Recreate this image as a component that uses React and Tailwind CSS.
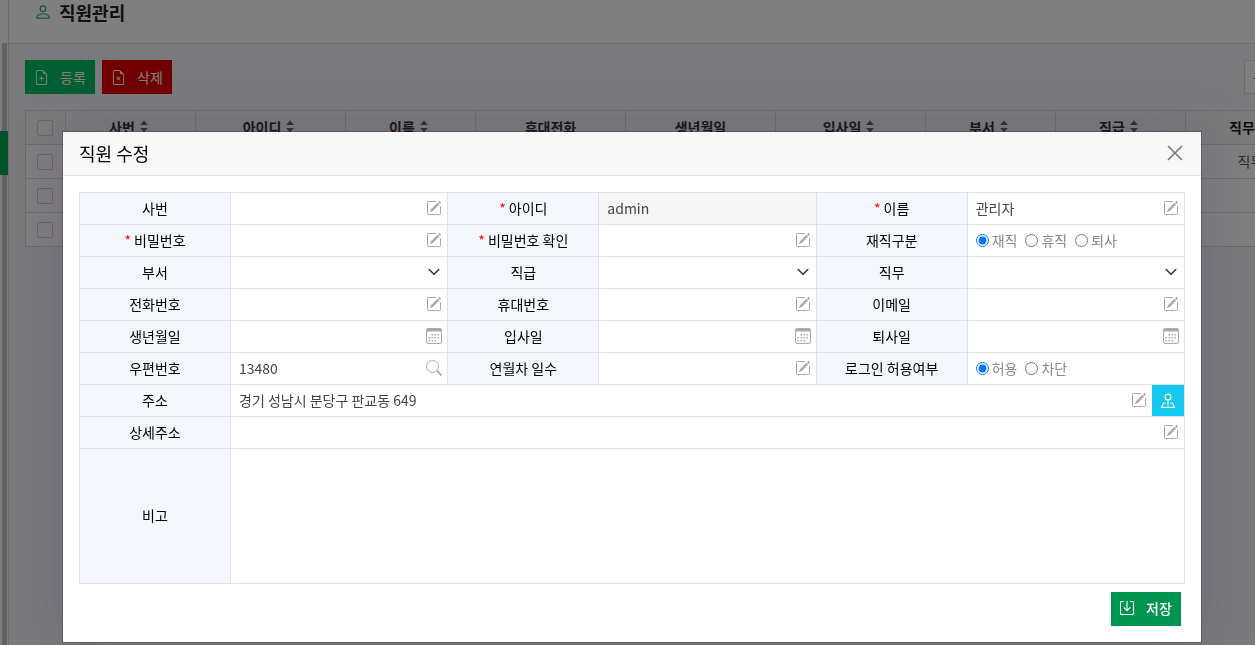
import { BsPerson, BsFileEarmarkPlus, BsFileEarmarkX } from "react-icons/bs";

const columns = [
  { name: "사번", width: "w-[130px]", sort: true },
  { name: "아이디", width: "w-[150px]", sort: true },
  { name: "이름", width: "w-[130px]", sort: true },
  { name: "휴대전화", width: "w-[150px]" },
  { name: "생년월일", width: "w-[150px]" },
  { name: "입사일", width: "w-[150px]", sort: true },
  { name: "부서", width: "w-[130px]", sort: true },
  { name: "직급", width: "w-[130px]", sort: true },
  { name: "직무", width: "w-[130px]", sort: true },
];

const rows = [{ 직무: "직무" }, {}, {}];

function SortIcon() {
  return (
    <svg width="8" height="13" viewBox="0 0 8 13" fill="#555" className="mr-1 ml-[5px] inline-block">
      <path d="M4 0.5L7.8 5H0.2z" />
      <path d="M4 12.5L7.8 8H0.2z" />
    </svg>
  );
}

function EditIcon() {
  return (
    <svg width="16" height="16" viewBox="0 0 16 16" fill="none" stroke="#aaa" className="shrink-0">
      <path d="M10 1.5H2.2Q1.5 1.5 1.5 2.2V13.8Q1.5 14.5 2.2 14.5H13.8Q14.5 14.5 14.5 13.8V6" />
      <path d="M4 12L5 9.2L11.4 2.8L13.2 4.6L6.8 11z" fill="#aaa" stroke="none" />
      <path d="M12.1 2.1L13.4 0.8L15.2 2.6L13.9 3.9z" fill="#aaa" stroke="none" />
    </svg>
  );
}

function CalendarIcon() {
  return (
    <svg width="16" height="16" viewBox="0 0 16 16" fill="#aaa" className="shrink-0">
      <rect x="0.5" y="0.5" width="15" height="15" rx="1.5" fill="none" stroke="#aaa" />
      <path d="M0.5 1.5Q0.5 0.5 1.5 0.5H14.5Q15.5 0.5 15.5 1.5V3.5H0.5z" />
      {[5.5, 8.5, 11.5].map((x) => (
        <rect key={`a${x}`} x={x} y="6" width="1.6" height="1.5" />
      ))}
      {[2.5, 5.5, 8.5, 11.5].map((x) => (
        <rect key={`b${x}`} x={x} y="9" width="1.6" height="1.5" />
      ))}
      {[2.5, 5.5, 8.5].map((x) => (
        <rect key={`c${x}`} x={x} y="12" width="1.6" height="1.5" />
      ))}
    </svg>
  );
}

function SearchIcon() {
  return (
    <svg width="16" height="16" viewBox="0 0 16 16" fill="none" stroke="#aaa" className="shrink-0">
      <circle cx="6.5" cy="6.5" r="6" />
      <path d="M11 11L15.3 15.3" strokeWidth="1.8" />
    </svg>
  );
}

function ChevronIcon() {
  return (
    <svg width="12" height="12" viewBox="0 0 12 12" fill="none" stroke="#343a40" strokeWidth="1.6" strokeLinecap="round" strokeLinejoin="round" className="pointer-events-none absolute right-[7px] top-[9px]">
      <path d="M1.2 3.5L6 8.3L10.8 3.5" />
    </svg>
  );
}

function MapPersonIcon() {
  return (
    <svg width="16" height="16" viewBox="0 0 16 16" fill="none" stroke="#fff" strokeWidth="1.2">
      <circle cx="8" cy="4" r="2.9" />
      <path d="M8 7V12.5" />
      <path d="M5.5 10H3.6L1.5 14.3H14.5L12.4 10H10.5" />
    </svg>
  );
}

function SaveIcon() {
  return (
    <svg width="16" height="16" viewBox="0 0 16 16" fill="none" stroke="#fff" strokeWidth="1.1">
      <path d="M5 1.5H2.5Q1.5 1.5 1.5 2.5V13.5Q1.5 14.5 2.5 14.5H13.5Q14.5 14.5 14.5 13.5V2.5Q14.5 1.5 13.5 1.5H11" />
      <path d="M8 1V10.5M4.7 7.3L8 10.6L11.3 7.3" />
    </svg>
  );
}

function CloseIcon() {
  return (
    <svg width="16" height="16" viewBox="0 0 16 16" fill="none" stroke="#777" strokeWidth="1.6">
      <path d="M1 1L15 15M15 1L1 15" />
    </svg>
  );
}

function Label({ id, required, children }) {
  return (
    <th scope="row" className="border border-[#dee2e6] bg-[#f3f6fb] p-0 pb-0.5 text-center font-normal text-black">
      <label htmlFor={id}>
        {required && <span className="text-[#f00]">* </span>}
        {children}
      </label>
    </th>
  );
}

function Cell({ span, children }) {
  return (
    <td colSpan={span} className="border border-[#dee2e6] p-0">
      {children}
    </td>
  );
}

function TextBox({ id, type = "text", value, icon = <EditIcon /> }) {
  return (
    <div className="flex h-[31px] items-center pr-[5px] pb-0.5 pl-2">
      <input id={id} type={type} defaultValue={value} className="h-full w-full min-w-0 flex-1 bg-transparent text-[#444] outline-none" />
      {icon}
    </div>
  );
}

function SelectBox({ id }) {
  return (
    <div className="relative h-[31px]">
      <select id={id} className="h-full w-full appearance-none bg-transparent px-2 outline-none">
        <option></option>
      </select>
      <ChevronIcon />
    </div>
  );
}

function RadioGroup({ name, options }) {
  return (
    <div role="radiogroup" className="flex h-[31px] items-center gap-2 pb-0.5 pl-2 text-[#888]">
      {options.map((option, i) => (
        <label key={option} className="flex items-center gap-[3px]">
          <input id={i === 0 ? name : undefined} type="radio" name={name} defaultChecked={i === 0} className="mt-0.5 h-[13px] w-[13px]" />
          {option}
        </label>
      ))}
    </div>
  );
}

function EmployeeList() {
  return (
    <div className="flex h-screen overflow-hidden bg-[#f4f5f9]">
      {/* Sidebar edge */}
      <aside className="flex w-[9px] shrink-0 flex-col border-r border-[#d5dade] bg-white pt-[43px]">
        <div className="ml-0.5 h-[88px] w-[5px] bg-[#c4c4c4]"></div>
        <div className="h-11 w-2 bg-[#00a651]"></div>
        <div className="ml-0.5 w-[5px] flex-1 bg-[#c4c4c4]"></div>
      </aside>

      <main className="min-w-0 flex-1 overflow-hidden">
        <header className="h-11 border-b border-[#d5dade] bg-white pl-[25px]">
          <h1 className="flex items-center gap-[7px] text-lg leading-6 font-bold text-[#222]">
            <BsPerson size={18} className="text-[#2ea77a]" />
            직원관리
          </h1>
        </header>

        <div className="flex w-[1307px] flex-col gap-4 pt-4 pl-4">
          <div className="flex justify-between">
            <div className="flex gap-[7px]">
              <button className="flex h-[34px] w-[70px] items-center gap-[11px] bg-[#00bf63] pl-[9px] text-white">
                <BsFileEarmarkPlus size={15} />
                등록
              </button>
              <button className="flex h-[34px] w-[70px] items-center gap-[11px] bg-[#e00000] pl-[9px] text-white">
                <BsFileEarmarkX size={15} />
                삭제
              </button>
            </div>
            <select aria-label="검색" className="h-[34px] w-[72px] appearance-none border border-[#d5dade] bg-white px-2 text-[#333]">
              <option>통합검색</option>
            </select>
          </div>

          <table className="table-fixed border-collapse bg-white">
            <thead>
              <tr className="h-[34px] bg-[#f7f7f7]">
                <th className="w-10 border border-[#d5dade] p-0 pr-0.5">
                  <input type="checkbox" aria-label="전체 선택" className="mx-auto block size-4 appearance-none rounded-xs border border-[#ccc]" />
                </th>
                {columns.map((col) => (
                  <th key={col.name} className={`${col.width} border border-[#d5dade] p-0 pb-0.5 font-bold text-[#222]`}>
                    <span className="inline-flex items-center">
                      {col.name}
                      {col.sort && <SortIcon />}
                    </span>
                  </th>
                ))}
              </tr>
            </thead>
            <tbody>
              {rows.map((row, i) => (
                <tr key={i} className="h-[34px]">
                  <td className="border border-[#d5dade] p-0 pr-0.5">
                    <input type="checkbox" aria-label={`${i + 1}행 선택`} className="mx-auto block size-4 appearance-none rounded-xs border border-[#ccc]" />
                  </td>
                  {columns.map((col) => (
                    <td key={col.name} className="border border-[#d5dade] p-0 pb-0.5 text-center text-[#555]">
                      {row[col.name]}
                    </td>
                  ))}
                </tr>
              ))}
            </tbody>
          </table>
        </div>
      </main>
    </div>
  );
}

function EditModal() {
  return (
    <div className="fixed inset-0 overflow-hidden bg-black/50 pt-[132px] pr-[54px] pl-[63px]">
      <section role="dialog" aria-label="직원 수정" className="bg-white shadow-[0_0_0_1px_rgba(0,0,0,0.2),0_0_50px_rgba(82,63,105,0.35)]">
        <div className="flex h-11 items-center justify-between border-b border-[#dee2e6] bg-[#f7f7f7] pr-[18px] pb-0.5 pl-4">
          <h2 className="text-lg font-normal text-black">직원 수정</h2>
          <button aria-label="닫기">
            <CloseIcon />
          </button>
        </div>

        <form className="p-4">
          <table className="w-full table-fixed border-collapse">
            <colgroup>
              <col className="w-[151px]" />
              <col />
              <col className="w-[151px]" />
              <col />
              <col className="w-[151px]" />
              <col />
            </colgroup>
            <tbody>
              <tr>
                <Label id="empNo">사번</Label>
                <Cell><TextBox id="empNo" /></Cell>
                <Label id="userId" required>아이디</Label>
                <Cell>
                  <div className="h-[31px] bg-[#f5f5f5] px-2 pb-0.5">
                    <input id="userId" readOnly defaultValue="admin" className="h-full w-full bg-transparent text-[#444] outline-none" />
                  </div>
                </Cell>
                <Label id="userName" required>이름</Label>
                <Cell><TextBox id="userName" value="관리자" /></Cell>
              </tr>
              <tr>
                <Label id="password" required>비밀번호</Label>
                <Cell><TextBox id="password" type="password" /></Cell>
                <Label id="passwordCheck" required>비밀번호 확인</Label>
                <Cell><TextBox id="passwordCheck" type="password" /></Cell>
                <Label id="status">재직구분</Label>
                <Cell><RadioGroup name="status" options={["재직", "휴직", "퇴사"]} /></Cell>
              </tr>
              <tr>
                <Label id="dept">부서</Label>
                <Cell><SelectBox id="dept" /></Cell>
                <Label id="rank">직급</Label>
                <Cell><SelectBox id="rank" /></Cell>
                <Label id="duty">직무</Label>
                <Cell><SelectBox id="duty" /></Cell>
              </tr>
              <tr>
                <Label id="tel">전화번호</Label>
                <Cell><TextBox id="tel" /></Cell>
                <Label id="mobile">휴대번호</Label>
                <Cell><TextBox id="mobile" /></Cell>
                <Label id="email">이메일</Label>
                <Cell><TextBox id="email" /></Cell>
              </tr>
              <tr>
                <Label id="birth">생년월일</Label>
                <Cell><TextBox id="birth" icon={<CalendarIcon />} /></Cell>
                <Label id="joinDate">입사일</Label>
                <Cell><TextBox id="joinDate" icon={<CalendarIcon />} /></Cell>
                <Label id="leaveDate">퇴사일</Label>
                <Cell><TextBox id="leaveDate" icon={<CalendarIcon />} /></Cell>
              </tr>
              <tr>
                <Label id="zip">우편번호</Label>
                <Cell><TextBox id="zip" value="13480" icon={<SearchIcon />} /></Cell>
                <Label id="leaveDays">연월차 일수</Label>
                <Cell><TextBox id="leaveDays" /></Cell>
                <Label id="login">로그인 허용여부</Label>
                <Cell><RadioGroup name="login" options={["허용", "차단"]} /></Cell>
              </tr>
              <tr>
                <Label id="address">주소</Label>
                <Cell span={5}>
                  <div className="flex">
                    <div className="flex-1">
                      <TextBox id="address" value="경기 성남시 분당구 판교동 649" />
                    </div>
                    <button type="button" aria-label="지도" className="flex w-8 items-center justify-center bg-[#15c8f0]">
                      <MapPersonIcon />
                    </button>
                  </div>
                </Cell>
              </tr>
              <tr>
                <Label id="addressDetail">상세주소</Label>
                <Cell span={5}><TextBox id="addressDetail" /></Cell>
              </tr>
              <tr>
                <Label id="memo">비고</Label>
                <Cell span={5}>
                  <textarea id="memo" className="block h-[134px] w-full resize-none p-2 outline-none"></textarea>
                </Cell>
              </tr>
            </tbody>
          </table>

          <div className="mt-2 mr-1 flex justify-end">
            <button type="button" className="flex h-[34px] w-[70px] items-center gap-[11px] bg-[#00954f] pb-0.5 pl-2 font-medium text-white">
              <SaveIcon />
              저장
            </button>
          </div>
        </form>
      </section>
    </div>
  );
}

export default function App() {
  return (
    <div className="font-['Noto_Sans_CJK_KR',sans-serif] text-sm">
      <EmployeeList />
      <EditModal />
    </div>
  );
}
